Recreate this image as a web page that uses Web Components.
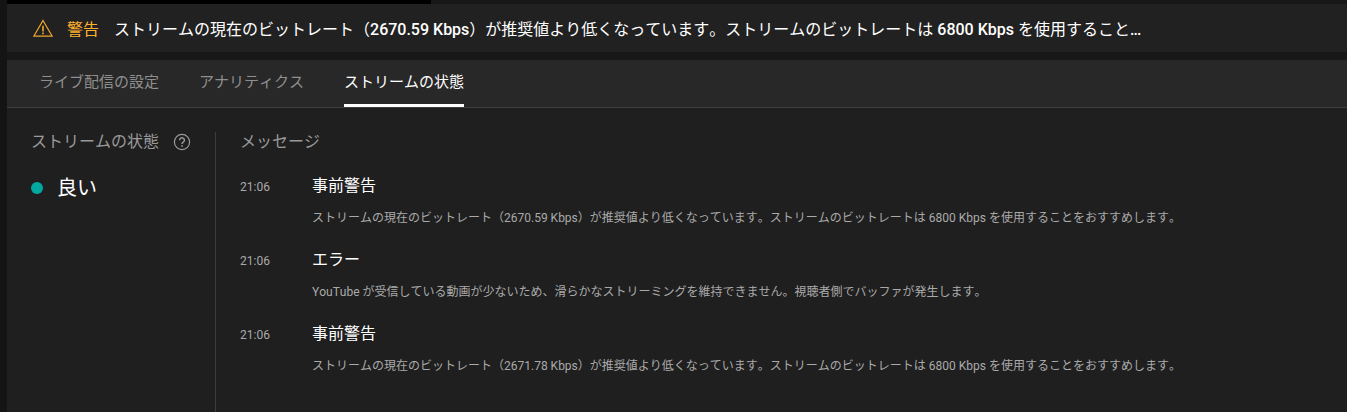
<!DOCTYPE html>
<html lang="ja">
<head>
<meta charset="utf-8">
<style>
    html, body { margin: 0; height: 100%; background: #141414; overflow: hidden; }
    body { font-family: Roboto, "Noto Sans CJK JP", sans-serif; font-kerning: none; }
    stream-page { height: 412px; }
    warning-bar b { font-weight: 500; }
    warning-bar i { font-style: normal; font-weight: 500; letter-spacing: -1px; }
</style>
</head>
<body>
<stream-page>
    <warning-bar slot="top">
        <span slot="label">警告</span>
        ストリームの現在のビットレート（<b>2670.59 Kbps</b>）が推奨値より低くなっています。ストリームのビットレートは <b>6800 Kbps</b> を使用すること<i>...</i>
    </warning-bar>
    <tab-bar slot="top">
        <tab-item>ライブ配信の設定</tab-item>
        <tab-item>アナリティクス</tab-item>
        <tab-item active>ストリームの状態</tab-item>
    </tab-bar>
    <status-side slot="side"></status-side>
    <message-list slot="main">
        <message-item time="21:06" title="事前警告">ストリームの現在のビットレート（2670.59 Kbps）が推奨値より低くなっています。ストリームのビットレートは 6800 Kbps を使用することをおすすめします。</message-item>
        <message-item time="21:06" title="エラー">YouTube が受信している動画が少ないため、滑らかなストリーミングを維持できません。視聴者側でバッファが発生します。</message-item>
        <message-item time="21:06" title="事前警告">ストリームの現在のビットレート（2671.78 Kbps）が推奨値より低くなっています。ストリームのビットレートは 6800 Kbps を使用することをおすすめします。</message-item>
    </message-list>
</stream-page>

<script>
class StreamPage extends HTMLElement {
    constructor() {
        super();
        this.attachShadow({mode: "open"}).innerHTML = `
            <style>
                :host { display: flex; flex-direction: column; margin-left: 7px; background: #181818; }
                .strip { height: 4px; width: 424px; background: #000; flex: none; }
                .body { flex: 1; display: flex; background: #1f1f1f; padding: 24px 0 0 24px; }
                .side { width: 184px; flex: none; border-right: 1px solid #3d3d3d; }
                .main { flex: 1; padding-left: 24px; }
            </style>
            <div class="strip"></div>
            <slot name="top"></slot>
            <div class="body">
                <div class="side"><slot name="side"></slot></div>
                <div class="main"><slot name="main"></slot></div>
            </div>`;
    }
}

class WarningBar extends HTMLElement {
    constructor() {
        super();
        this.attachShadow({mode: "open"}).innerHTML = `
            <style>
                :host { display: flex; align-items: center; height: 48px; background: #212121; margin-bottom: 8px; padding-left: 26px; color: #fff; font-size: 16px; white-space: nowrap; }
                svg { width: 20px; height: 20px; margin-right: 14px; flex: none; }
                .label { color: #ffb02e; margin-right: 15px; }
            </style>
            <svg viewBox="0 0 20 20" fill="none" stroke="#f2a72b" stroke-width="1.2">
                <path d="M10 2.5 L19.2 18.2 H.8 Z"/>
                <path d="M10 7.8v5.6M10 14.6v1.6" stroke-width="1.6"/>
            </svg>
            <span class="label"><slot name="label"></slot></span>
            <span><slot></slot></span>`;
    }
}

class TabBar extends HTMLElement {
    constructor() {
        super();
        this.attachShadow({mode: "open"}).innerHTML = `
            <style>
                :host { display: flex; gap: 40px; height: 47px; padding-left: 32px; background: #282828; border-bottom: 1px solid #3d3d3d; }
            </style>
            <slot></slot>`;
    }
}

class TabItem extends HTMLElement {
    constructor() {
        super();
        this.attachShadow({mode: "open"}).innerHTML = `
            <style>
                :host { display: block; box-sizing: border-box; height: 47px; line-height: 45px; font-size: 15px; color: #8f8f8f; white-space: nowrap; }
                :host([active]) { color: #fff; border-bottom: 3px solid #fff; }
            </style>
            <slot></slot>`;
    }
}

class StatusSide extends HTMLElement {
    constructor() {
        super();
        this.attachShadow({mode: "open"}).innerHTML = `
            <style>
                :host { display: block; margin-top: -2px; }
                .head { display: flex; align-items: center; gap: 14px; height: 20px; font-size: 16px; color: #9a9a9a; }
                svg { width: 18px; height: 18px; margin-top: 3px; }
                .state { display: flex; align-items: center; gap: 14px; margin-top: 23px; font-size: 20px; color: #fff; line-height: 30px; }
                .dot { width: 12px; height: 12px; border-radius: 50%; background: #00a8a0; }
            </style>
            <div class="head">
                <span>ストリームの状態</span>
                <svg viewBox="0 0 18 18" fill="none" stroke="#9a9a9a" stroke-width="1.2">
                    <circle cx="9" cy="9" r="7.6"/>
                    <path d="M6.6 7.2a2.4 2.4 0 1 1 3.7 2c-.9.5-1.3 1-1.3 1.9" stroke-width="1.5"/>
                    <path d="M9 12.2v1.6" stroke-width="1.6"/>
                </svg>
            </div>
            <div class="state"><span class="dot"></span><span>良い</span></div>`;
    }
}

class MessageList extends HTMLElement {
    constructor() {
        super();
        this.attachShadow({mode: "open"}).innerHTML = `
            <style>
                :host { display: block; }
                h2 { margin: 0 0 22px; height: 20px; line-height: 20px; font-size: 16px; font-weight: 400; color: #9a9a9a; }
            </style>
            <h2>メッセージ</h2>
            <slot></slot>`;
    }
}

class MessageItem extends HTMLElement {
    constructor() {
        super();
        this.attachShadow({mode: "open"}).innerHTML = `
            <style>
                :host { display: grid; grid-template-columns: 72px 1fr; height: 74px; white-space: nowrap; }
                .time { font-size: 12px; color: #aaa; line-height: 24px; padding-top: 1px; }
                .title { font-size: 16px; color: #fff; line-height: 24px; }
                .text { font-size: 12px; color: #aaa; line-height: 18px; margin-top: 11px; }
            </style>
            <div class="time"></div>
            <div>
                <div class="title"></div>
                <div class="text"><slot></slot></div>
            </div>`;
        this.shadowRoot.querySelector(".time").textContent = this.getAttribute("time");
        this.shadowRoot.querySelector(".title").textContent = this.getAttribute("title");
    }
}

window.customElements.define("stream-page", StreamPage);
window.customElements.define("warning-bar", WarningBar);
window.customElements.define("tab-bar", TabBar);
window.customElements.define("tab-item", TabItem);
window.customElements.define("status-side", StatusSide);
window.customElements.define("message-list", MessageList);
window.customElements.define("message-item", MessageItem);
</script>
</body>
</html>
